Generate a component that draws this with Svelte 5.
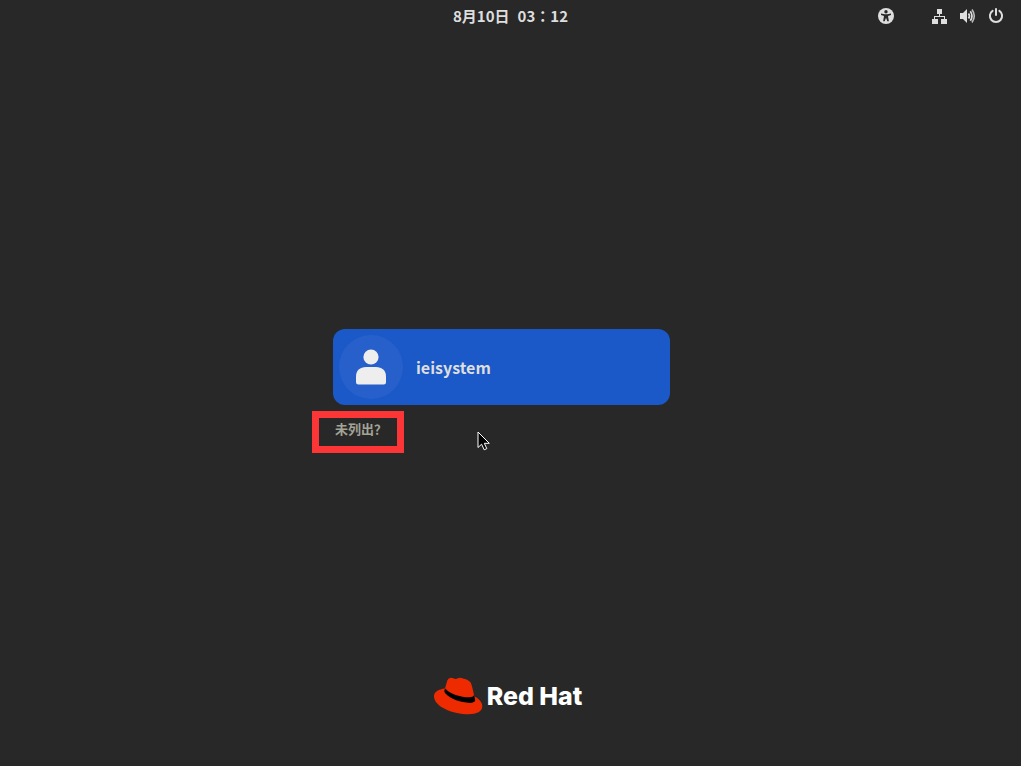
<script>
  let { username = 'ieisystem', date = '8月10日', time = '03：12' } = $props();
</script>

<div class="screen">
  <header class="panel">
    <time class="clock"><span>{date}</span><span>{time}</span></time>
    <div class="status">
      <button class="icon-button accessibility" aria-label="辅助功能">
        <svg width="16" height="16" viewBox="0 0 16 16">
          <circle cx="8" cy="8" r="8" fill="#dedede" />
          <circle cx="8" cy="3.7" r="1.7" fill="#282828" />
          <path d="M3 5.6 6.7 6.2h2.6L13 5.6v1.5L10 8l.9 5.2H9.3L8 9.8l-1.3 3.4H5.1L6 8 3 7.1z" fill="#282828" />
        </svg>
      </button>
      <button class="icon-button" aria-label="网络">
        <svg width="16" height="16" viewBox="0 0 16 16" fill="#dedede">
          <path d="M5 1h5v5H5zM0 11h6v5H0zM9 11h6v5H9z" />
          <path d="M7 6h1v2h5v3h-1V9H3v2H2V8h5z" />
        </svg>
      </button>
      <button class="icon-button" aria-label="音量">
        <svg width="16" height="16" viewBox="0 0 16 16" fill="none" stroke="#dedede">
          <path d="M0 5h3l4-4v14l-4-4H0z" fill="#dedede" stroke="none" />
          <path d="M8.5 5.4q2 2.6 0 5.2" stroke-width="1.7" />
          <path d="M10.3 3.2q3.4 4.8 0 9.6" stroke-width="1.7" />
          <path d="M12 1.5q4.6 6.5 0 13" stroke-width="1.6" opacity="0.8" />
        </svg>
      </button>
      <button class="icon-button" aria-label="电源">
        <svg width="16" height="16" viewBox="0 0 16 16" fill="none" stroke="#dedede" stroke-width="2" stroke-linecap="round">
          <path d="M4.6 2.9a6.1 6.1 0 1 0 6.8 0M8 1v6" />
        </svg>
      </button>
    </div>
  </header>

  <main>
    <div class="login">
      <button class="user">
        <span class="avatar">
          <svg width="32" height="36" viewBox="0 0 32 36" fill="#eeeeee">
            <circle cx="16" cy="8" r="7.6" />
            <path d="M1 27.5C1 21.5 5 18 11 18h10c6 0 10 3.5 10 9.5V33q0 2.5-2.5 2.5h-25Q1 35.5 1 33z" />
          </svg>
        </span>
        <span class="name">{username}</span>
      </button>
      <button class="not-listed">未列出？</button>

      <svg class="pointer" width="14" height="20" viewBox="0 0 14 20">
        <path d="M1 1v15.5l3.6-3.3 2.6 5.6 2.6-1.2-2.5-5.3h5z" fill="#000" stroke="#fff" />
      </svg>
    </div>
  </main>

  <footer class="brand">
    <svg width="50" height="38" viewBox="0 0 50 38">
      <path
        d="M12 11.5 14.3 3.5Q15.3.8 18 .8c2 0 2.8 1.2 4.5 1.2 2 0 3-1.5 5.7-1.1 3.8.6 7.5 2.3 9 4.1 1.5 1.8 2.6 7.5 4.2 14.6 4.6 2.1 7.9 5.8 7.9 9.7 0 5.3-5.6 7.9-13.8 7.9C20.5 37.2 1 30 1 19.2c0-4.4 4.7-7 11-7.7z"
        fill="#ee2b00"
      />
      <path
        d="M12 11.5c-.9 2.2-.9 3.6.5 5.1 4.8 5.3 15.5 9.3 24.2 9.3 3.6 0 5.6-.9 5.5-2.8l-1.1-5c-.5 1.4-2.5 2.2-5.4 2.2-8 0-17.3-3.3-21.7-7.1-1-.9-1.5-1.3-2-1.7z"
        fill="#000"
      />
    </svg>
    <span>Red Hat</span>
  </footer>
</div>

<style>
  :global(body) {
    margin: 0;
    background: #282828;
  }

  .screen {
    display: flex;
    flex-direction: column;
    min-height: 100vh;
    color: #dedede;
    font-family: 'Noto Sans CJK SC', sans-serif;
  }

  button {
    padding: 0;
    border: 0;
    background: none;
    color: inherit;
    font: inherit;
    cursor: pointer;
  }

  .panel {
    display: grid;
    grid-template-columns: 1fr auto 1fr;
    align-items: center;
    height: 32px;
    padding: 0 17px;
  }

  .clock {
    display: flex;
    grid-column: 2;
    gap: 8px;
    font-family: 'Noto Sans CJK TC', sans-serif;
    font-size: 15px;
    font-weight: 700;
    line-height: 24px;
  }

  .status {
    display: flex;
    justify-content: flex-end;
    gap: 12px;
  }

  .icon-button {
    display: flex;
  }

  .accessibility {
    margin-right: 26px;
  }

  main {
    display: flex;
    flex: 1;
    align-items: center;
    justify-content: center;
    padding: 73px 18px 0 0;
  }

  .login {
    position: relative;
    width: 34%;
    min-width: 300px;
    max-width: 337px;
  }

  .user {
    display: flex;
    align-items: center;
    gap: 13px;
    box-sizing: border-box;
    width: 100%;
    padding: 6px;
    border-radius: 12px;
    background: #1a59c7;
  }

  .avatar {
    display: flex;
    align-items: center;
    justify-content: center;
    width: 64px;
    height: 64px;
    border-radius: 50%;
    background: #2760cb;
  }

  .name {
    font-size: 16px;
    font-weight: 700;
    line-height: 24px;
  }

  .not-listed {
    margin: 6px 0 0 -21px;
    padding: 0 10px 6px 16px;
    border: 7px solid #fc3636;
    color: #a3a396;
    font-size: 13px;
    font-weight: 700;
    line-height: 22px;
  }

  .pointer {
    position: absolute;
    top: 102px;
    left: 144px;
  }

  .brand {
    display: flex;
    align-items: center;
    justify-content: center;
    gap: 4px;
    padding: 0 6px 51px 0;
    color: #fff;
    font-family: Inter, sans-serif;
    font-size: 25px;
    font-weight: 800;
    line-height: 32px;
  }
</style>
